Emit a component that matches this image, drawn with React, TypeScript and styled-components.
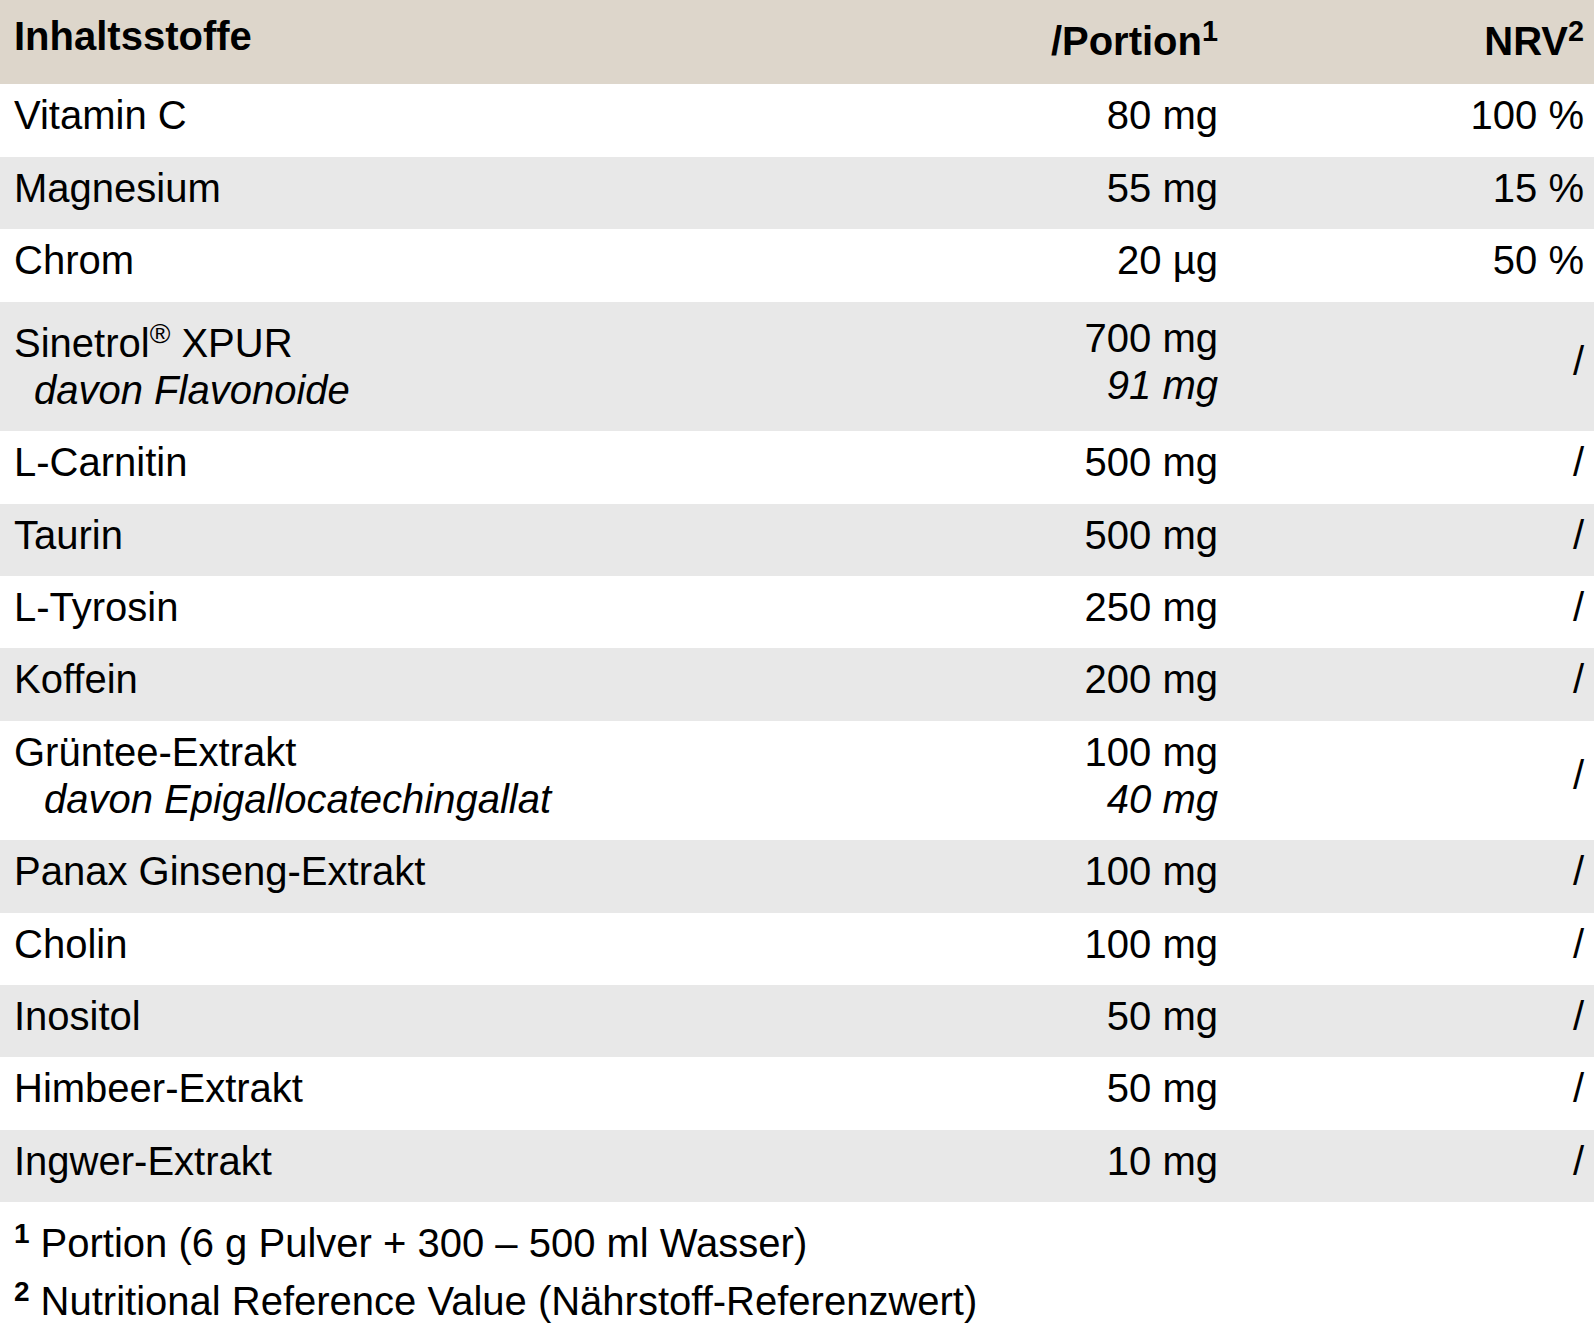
import styled, { createGlobalStyle } from "styled-components";

const GlobalStyle = createGlobalStyle`
	html, body {
		margin: 0;
		padding: 0;
		background: #ffffff;
	}
	body {
		font-family: "Liberation Sans", Arial, Helvetica, sans-serif;
		color: #000000;
	}
`

type IngredientRow = {
	name: string;
	reg?: boolean;
	nameSuffix?: string;
	amount: string;
	nrv: string;
	sub?: {
		name: string;
		amount: string;
		indent: number;
	};
}

const INGREDIENTS: IngredientRow[] = [
	{ name: 'Vitamin C', amount: '80 mg', nrv: '100 %' },
	{ name: 'Magnesium', amount: '55 mg', nrv: '15 %' },
	{ name: 'Chrom', amount: '20 µg', nrv: '50 %' },
	{
		name: 'Sinetrol',
		reg: true,
		nameSuffix: ' XPUR',
		amount: '700 mg',
		nrv: '/',
		sub: { name: 'davon Flavonoide', amount: '91 mg', indent: 20 },
	},
	{ name: 'L-Carnitin', amount: '500 mg', nrv: '/' },
	{ name: 'Taurin', amount: '500 mg', nrv: '/' },
	{ name: 'L-Tyrosin', amount: '250 mg', nrv: '/' },
	{ name: 'Koffein', amount: '200 mg', nrv: '/' },
	{
		name: 'Grüntee-Extrakt',
		amount: '100 mg',
		nrv: '/',
		sub: { name: 'davon Epigallocatechingallat', amount: '40 mg', indent: 30 },
	},
	{ name: 'Panax Ginseng-Extrakt', amount: '100 mg', nrv: '/' },
	{ name: 'Cholin', amount: '100 mg', nrv: '/' },
	{ name: 'Inositol', amount: '50 mg', nrv: '/' },
	{ name: 'Himbeer-Extrakt', amount: '50 mg', nrv: '/' },
	{ name: 'Ingwer-Extrakt', amount: '10 mg', nrv: '/' },
]

const Page = styled.div`
	width: 1594px;
	font-size: 40px;
	line-height: 47px;
`

const Table = styled.div`
	display: flex;
	flex-direction: column;
`

const Row = styled.div<{ $shade: 'head' | 'white' | 'gray' }>`
	display: grid;
	grid-template-columns: 1fr 300px 366px;
	align-items: center;
	padding: ${p => p.$shade === 'head' ? '8px 10px 19px 14px' : '8px 10px 17.4px 14px'};
	background: ${p => p.$shade === 'head' ? '#ddd6cb' : p.$shade === 'gray' ? '#e8e8e8' : '#ffffff'};
	font-weight: ${p => p.$shade === 'head' ? 700 : 400};
`

const NameCell = styled.div`
	display: flex;
	flex-direction: column;
	white-space: nowrap;
`

const ValueCell = styled.div`
	display: flex;
	flex-direction: column;
	align-items: flex-end;
	white-space: nowrap;
`

const SubText = styled.span<{ $indent?: number }>`
	font-style: italic;
	padding-left: ${p => p.$indent ?? 0}px;
`

const Sup = styled.sup`
	font-size: 0.72em;
	vertical-align: super;
`

const RegMark = styled.sup`
	font-size: 0.7em;
	vertical-align: super;
`

const Footnotes = styled.div`
	padding: 18px 14px 0 14px;
	display: flex;
	flex-direction: column;
	gap: 11px;
	font-size: 40px;
`

const FootLine = styled.div`
	white-space: nowrap;
`

const FootMark = styled.sup`
	font-size: 0.7em;
	font-weight: 700;
	vertical-align: super;
	line-height: 0;
	margin-right: 11px;
`

// Nährwerttabelle
function App() {
	return (
		<>
			<GlobalStyle />
			<Page>
				<Table>
					<Row $shade="head">
						<NameCell>Inhaltsstoffe</NameCell>
						<ValueCell><span>/Portion<Sup>1</Sup></span></ValueCell>
						<ValueCell><span>NRV<Sup>2</Sup></span></ValueCell>
					</Row>
					{INGREDIENTS.map((item, index) => {
						return (
							<Row key={index} $shade={index % 2 === 0 ? 'white' : 'gray'}>
								<NameCell>
									<span>
										{item.name}
										{item.reg && <RegMark>®</RegMark>}
										{item.nameSuffix}
									</span>
									{item.sub && <SubText $indent={item.sub.indent}>{item.sub.name}</SubText>}
								</NameCell>
								<ValueCell>
									<span>{item.amount}</span>
									{item.sub && <SubText>{item.sub.amount}</SubText>}
								</ValueCell>
								<ValueCell>{item.nrv}</ValueCell>
							</Row>
						)
					})}
				</Table>
				<Footnotes>
					<FootLine><FootMark>1</FootMark>Portion (6 g Pulver + 300 – 500 ml Wasser)</FootLine>
					<FootLine><FootMark>2</FootMark>Nutritional Reference Value (Nährstoff-Referenzwert)</FootLine>
				</Footnotes>
			</Page>
		</>
	)
}

export default App;
